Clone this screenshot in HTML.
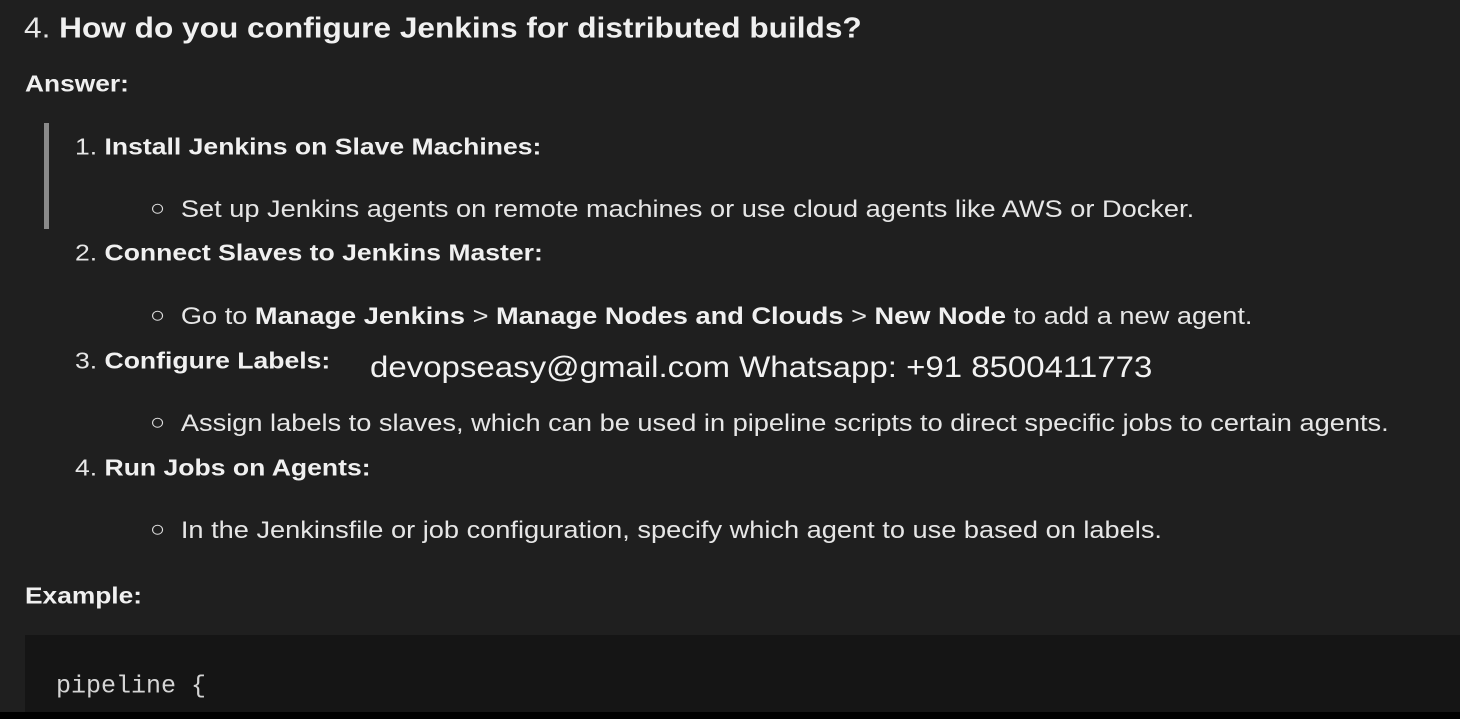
<!DOCTYPE html>
<html><head><meta charset="utf-8"><style>
body{margin:0;width:1460px;height:719px;background:#1f1f1f;overflow:hidden;position:relative;font-family:"Liberation Sans",sans-serif;color:#e6e6e6}
.t{position:absolute;white-space:nowrap;line-height:1;transform-origin:0 50%}
b{font-weight:bold;color:#f0f0f0}
.bar{position:absolute;left:44px;top:123px;width:5px;height:106px;background:#8a8a8a}
.code{position:absolute;left:25px;top:635px;right:0;height:80px;background:#151515}
.bot{position:absolute;left:0;right:0;top:712px;height:7px;background:#000}
.c{font-family:"Liberation Mono",monospace;font-size:25px;color:#d4d4d4;transform:translateY(-50%)}
.s{font-size:24.5px;transform:translateY(-50%) scaleX(1.11)}
.h{font-size:23.5px;transform:translateY(-50%) scaleX(1.13)}
.dot{display:inline-block;width:8px;height:8px;border:1.6px solid #ddd;border-radius:50%;margin-right:16px;vertical-align:middle;position:relative;top:-2px}
</style></head><body>
<div class="t" style="left:24px;top:29px;font-size:29px;transform:translateY(-50%) scaleX(1.09)">4. <b>How do you configure Jenkins for distributed builds?</b></div>
<div class="t" style="left:25px;top:84px;font-size:23.5px;transform:translateY(-50%) scaleX(1.12)"><b>Answer:</b></div>
<div class="bar"></div>
<div class="t h" style="left:75px;top:147px">1. <b>Install Jenkins on Slave Machines:</b></div>
<div class="t s" style="left:152px;top:210px"><span class="dot"></span>Set up Jenkins agents on remote machines or use cloud agents like AWS or Docker.</div>
<div class="t h" style="left:75px;top:253px">2. <b>Connect Slaves to Jenkins Master:</b></div>
<div class="t s" style="left:152px;top:317px"><span class="dot"></span>Go to <b>Manage Jenkins</b> &gt; <b>Manage Nodes and Clouds</b> &gt; <b>New Node</b> to add a new agent.</div>
<div class="t h" style="left:75px;top:361px">3. <b>Configure Labels:</b></div>
<div class="t" style="left:370px;top:368px;font-size:30px;color:#f2f2f2;transform:translateY(-50%) scaleX(1.10)">devopseasy@gmail.com Whatsapp: +91 8500411773</div>
<div class="t s" style="left:152px;top:424px"><span class="dot"></span>Assign labels to slaves, which can be used in pipeline scripts to direct specific jobs to certain agents.</div>
<div class="t h" style="left:75px;top:468px">4. <b>Run Jobs on Agents:</b></div>
<div class="t s" style="left:152px;top:531px"><span class="dot"></span>In the Jenkinsfile or job configuration, specify which agent to use based on labels.</div>
<div class="t" style="left:25px;top:596px;font-size:23.5px;transform:translateY(-50%) scaleX(1.12)"><b>Example:</b></div>
<div class="code"></div>
<div class="t c" style="left:56px;top:686px">pipeline {</div>
<div class="bot"></div>
</body></html>
